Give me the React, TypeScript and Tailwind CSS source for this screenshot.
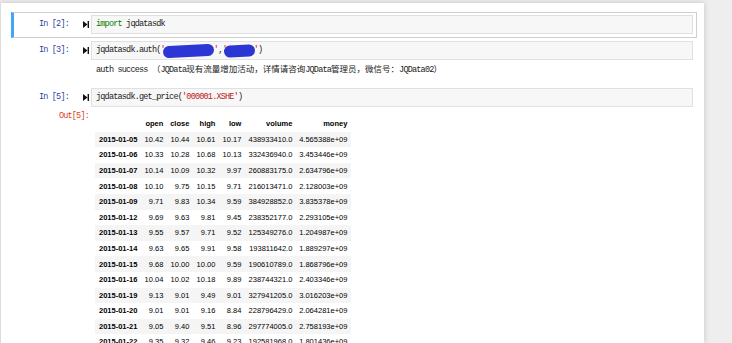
import React from "react";

const rows: [string, string, string, string, string, string, string][] = [
  ["2015-01-05", "10.42", "10.44", "10.61", "10.17", "438933410.0", "4.565388e+09"],
  ["2015-01-06", "10.33", "10.28", "10.68", "10.13", "332436940.0", "3.453446e+09"],
  ["2015-01-07", "10.14", "10.09", "10.32", "9.97", "260883175.0", "2.634796e+09"],
  ["2015-01-08", "10.10", "9.75", "10.15", "9.71", "216013471.0", "2.128003e+09"],
  ["2015-01-09", "9.71", "9.83", "10.34", "9.59", "384928852.0", "3.835378e+09"],
  ["2015-01-12", "9.69", "9.63", "9.81", "9.45", "238352177.0", "2.293105e+09"],
  ["2015-01-13", "9.55", "9.57", "9.71", "9.52", "125349276.0", "1.204987e+09"],
  ["2015-01-14", "9.63", "9.65", "9.91", "9.58", "193811642.0", "1.889297e+09"],
  ["2015-01-15", "9.68", "10.00", "10.00", "9.59", "190610789.0", "1.868796e+09"],
  ["2015-01-16", "10.04", "10.02", "10.18", "9.89", "238744321.0", "2.403346e+09"],
  ["2015-01-19", "9.13", "9.01", "9.49", "9.01", "327941205.0", "3.016203e+09"],
  ["2015-01-20", "9.01", "9.01", "9.16", "8.84", "228796429.0", "2.064281e+09"],
  ["2015-01-21", "9.05", "9.40", "9.51", "8.96", "297774005.0", "2.758193e+09"],
  ["2015-01-22", "9.35", "9.32", "9.46", "9.23", "192581968.0", "1.801436e+09"],
];

const mono = "font-['Liberation_Mono','Noto_Sans_CJK_SC',monospace] text-[8.5px] tracking-[-0.8px]";

function RunIcon() {
  return (
    <svg width="6" height="7" viewBox="0 0 6 7" className="block">
      <path d="M0 0 L4.5 3.5 L0 7 Z" fill="#111" />
      <rect x="4.6" y="0" width="1.4" height="7" fill="#111" />
    </svg>
  );
}

function Cell({
  prompt,
  selected,
  children,
  output,
}: {
  prompt: string;
  selected?: boolean;
  children: React.ReactNode;
  output?: React.ReactNode;
}) {
  return (
    <div
      className={`ml-[10px] w-[686px] border border-l-[3px] pt-[2px] pb-[3px] ${
        selected ? "border-[#cfcfcf] border-l-[#42a5f5]" : "border-transparent"
      }`}
    >
      <div className="flex h-[19px] items-center">
        <div className={`w-[56px] pr-[1px] text-right text-[#303f9f] ${mono}`}>{prompt}</div>
        <div className="w-[21px] pl-[13px]">
          <RunIcon />
        </div>
        <div
          className={`mr-[3px] flex h-[19px] flex-1 items-center border border-[#e0e0e0] bg-[#f7f7f7] pl-[4px] text-[#222] ${mono}`}
        >
          {children}
        </div>
      </div>
      {output}
    </div>
  );
}

function Blob({ w, ml }: { w: number; ml: string }) {
  return (
    <span
      className={`relative inline-block h-[12px] -rotate-[3deg] rounded-full bg-[#2b36d4] ${ml}`}
      style={{ width: w }}
    />
  );
}

const cjk = "text-[8.5px] tracking-normal";

export default function App() {
  return (
    <div className="h-[343px] w-[732px] overflow-hidden bg-[#eeeeee]">
      <div className="mt-[3px] h-[340px] w-[704px] border-l border-[#dcdcdc] bg-white pt-[9px] shadow-[0_0_6px_rgba(0,0,0,0.18)]">
        <Cell prompt="In [2]:" selected>
          <span className="text-[#008000]">import</span>
          <span>&nbsp;jqdatasdk</span>
        </Cell>

        <Cell
          prompt="In [3]:"
          output={
            <div className={`flex h-[21px] items-center whitespace-nowrap pl-[82px] text-[#222] ${mono}`}>
              <span>auth success&nbsp;</span>
              <span className={cjk}>（</span>
              <span>JQData</span>
              <span className={cjk}>现有流量增加活动，详情请咨询</span>
              <span>JQData</span>
              <span className={cjk}>管理员，微信号：</span>
              <span>JQData02</span>
              <span className={cjk}>）</span>
            </div>
          }
        >
          <span>jqdatasdk.auth(</span>
          <span className="text-[#ba2121]">'</span>
          <Blob w={51} ml="-ml-[2px]" />
          <span className="text-[#ba2121]">'</span>
          <span>,</span>
          <span className="text-[#ba2121]">'</span>
          <Blob w={31} ml="-ml-[3px]" />
          <span className="-ml-[1px] text-[#ba2121]">'</span>
          <span>)</span>
        </Cell>

        <Cell
          prompt="In [5]:"
          output={
            <div className="flex">
              <div className={`w-[75px] pt-[3px] text-right text-[#d84315] ${mono}`}>Out[5]:</div>
              <div className="ml-[6px] mt-[9px]">
                <table className="table-fixed border-collapse whitespace-nowrap font-['Liberation_Sans',Arial,sans-serif] text-[7.5px] text-black">
                  <thead>
                    <tr className="h-[15.6px] font-bold">
                      <th className="w-[46px]"></th>
                      <th className="w-[26px] pr-[4px] text-right">open</th>
                      <th className="w-[26px] pr-[4px] text-right">close</th>
                      <th className="w-[26px] pr-[4px] text-right">high</th>
                      <th className="w-[26px] pr-[4px] text-right">low</th>
                      <th className="w-[51px] pr-[4px] text-right">volume</th>
                      <th className="w-[55px] pr-[4px] text-right">money</th>
                    </tr>
                  </thead>
                  <tbody>
                    {rows.map((r, i) => (
                      <tr key={r[0]} className={`h-[15.6px] ${i % 2 === 0 ? "bg-[#f5f5f5]" : "bg-white"}`}>
                        <th className="px-[4px] text-left font-bold">{r[0]}</th>
                        {r.slice(1).map((v, j) => (
                          <td key={j} className="pr-[4px] text-right">
                            {v}
                          </td>
                        ))}
                      </tr>
                    ))}
                  </tbody>
                </table>
              </div>
            </div>
          }
        >
          <span>jqdatasdk.get_price(</span>
          <span className="text-[#ba2121]">'000001.XSHE'</span>
          <span>)</span>
        </Cell>
      </div>
    </div>
  );
}
